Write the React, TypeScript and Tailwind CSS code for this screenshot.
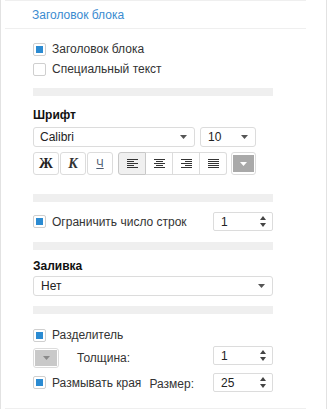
import React from "react";

const Check = ({ checked }: { checked?: boolean }) => (
  <span className="w-[13px] h-[13px] border border-[#cfcfcf] rounded-[2px] bg-white flex items-center justify-center shrink-0">
    {checked && <span className="w-[7px] h-[7px] bg-[#2b8bd2]" />}
  </span>
);

const Caret = ({ color = "#555" }: { color?: string }) => (
  <svg width="7" height="4" viewBox="0 0 7 4">
    <path d="M0 0 L7 0 L3.5 4 Z" fill={color} />
  </svg>
);

const Spin = ({ value }: { value: string }) => (
  <div className="w-[60px] h-[19px] border border-[#dcdcdc] rounded-[2px] bg-white flex items-center justify-between pl-[7px] pr-[6px] text-[12px] text-[#222]">
    <span>{value}</span>
    <svg width="6" height="11" viewBox="0 0 6 11">
      <path d="M0 4 L6 4 L3 0 Z" fill="#444" />
      <path d="M0 7 L6 7 L3 11 Z" fill="#444" />
    </svg>
  </div>
);

const Bar = () => <div className="w-[240px] h-[8px] bg-[#efefef]" />;

const AlignIcon = ({ kind }: { kind: "left" | "center" | "right" | "justify" }) => {
  const rows = [11, 7, 11, 7, 11];
  return (
    <svg width="11" height="11" viewBox="0 0 11 11">
      {rows.map((w, i) => {
        const ww = kind === "justify" ? 11 : w;
        const x = kind === "left" || kind === "justify" ? 0 : kind === "center" ? (11 - ww) / 2 : 11 - ww;
        return <rect key={i} x={x} y={i * 2 + 1} width={ww} height="1" fill="#333" />;
      })}
    </svg>
  );
};

export default function App() {
  return (
    <div className="w-[327px] h-[409px] bg-white border-l border-r border-[#e2e2e2] font-['Liberation_Sans',Arial,sans-serif] text-[12px] text-[#333] overflow-hidden">
      <div className="ml-[4px] w-[301px] h-[409px] border-t border-b border-[#efefef] flex flex-col">
        <div className="h-[28px] border-b border-[#efefef] flex items-center pl-[27px] text-[12px] text-[#3a8bd0] shrink-0">
          Заголовок блока
        </div>
        <div className="pl-[28px] flex flex-col">
          <div className="mt-[10px] h-[20px] flex items-center gap-[6px]">
            <Check checked />
            <span>Заголовок блока</span>
          </div>
          <div className="h-[20px] flex items-center gap-[6px]">
            <Check />
            <span>Специальный текст</span>
          </div>
          <div className="mt-[9px]">
            <Bar />
          </div>
          <div className="mt-[11px] h-[16px] leading-[16px] font-bold text-[#111]">Шрифт</div>
          <div className="mt-[4px] flex gap-[5px]">
            <div className="w-[162px] h-[20px] border border-[#dcdcdc] rounded-[3px] flex items-center justify-between pl-[6px] pr-[7px] text-[#222]">
              <span>Calibri</span>
              <Caret />
            </div>
            <div className="w-[56px] h-[20px] border border-[#dcdcdc] rounded-[3px] flex items-center justify-between pl-[7px] pr-[7px] text-[#222]">
              <span>10</span>
              <Caret />
            </div>
          </div>
          <div className="mt-[5px] flex items-center h-[23px]">
            <div className="w-[26px] h-[23px] border border-[#dcdcdc] rounded-[3px] flex items-center justify-center font-['Liberation_Serif',serif] font-bold text-[14px] text-[#222]">
              Ж
            </div>
            <div className="ml-[1px] w-[26px] h-[23px] border border-[#dcdcdc] rounded-[3px] flex items-center justify-center font-['Liberation_Serif',serif] font-bold italic text-[14px] text-[#333]">
              К
            </div>
            <div className="ml-[1px] w-[26px] h-[23px] border border-[#dcdcdc] rounded-[3px] flex items-center justify-center text-[11px] text-[#4a5a70] underline">
              Ч
            </div>
            <div className="ml-[5px] flex h-[23px]">
              <div className="w-[28px] h-[23px] border border-[#c8c8c8] bg-[#f0f0f0] rounded-l-[3px] flex items-center justify-center">
                <AlignIcon kind="left" />
              </div>
              <div className="w-[27px] h-[23px] border-y border-r border-[#dcdcdc] flex items-center justify-center">
                <AlignIcon kind="center" />
              </div>
              <div className="w-[27px] h-[23px] border-y border-r border-[#dcdcdc] flex items-center justify-center">
                <AlignIcon kind="right" />
              </div>
              <div className="w-[27px] h-[23px] border-y border-r border-[#dcdcdc] rounded-r-[3px] flex items-center justify-center">
                <AlignIcon kind="justify" />
              </div>
            </div>
            <div className="ml-[4px] w-[25px] h-[23px] border border-[#dcdcdc] rounded-[3px] flex items-center justify-center">
              <div className="w-[21px] h-[17px] bg-[#a9a9a9] flex items-center justify-center">
                <Caret color="#fff" />
              </div>
            </div>
          </div>
          <div className="mt-[19px]">
            <Bar />
          </div>
          <div className="mt-[10px] w-[240px] flex items-center justify-between h-[19px]">
            <div className="flex items-center gap-[6px]">
              <Check checked />
              <span>Ограничить число строк</span>
            </div>
            <Spin value="1" />
          </div>
          <div className="mt-[11px]">
            <Bar />
          </div>
          <div className="mt-[8px] h-[16px] leading-[16px] font-bold text-[#111]">Заливка</div>
          <div className="mt-[2px] w-[240px] h-[20px] border border-[#dcdcdc] rounded-[3px] flex items-center justify-between pl-[7px] pr-[7px] text-[#222]">
            <span>Нет</span>
            <Caret />
          </div>
          <div className="mt-[10px]">
            <Bar />
          </div>
          <div className="mt-[11px] h-[20px] flex items-center gap-[6px]">
            <Check checked />
            <span>Разделитель</span>
          </div>
          <div className="mt-[1px] w-[240px] flex items-start justify-between h-[22px]">
            <div className="flex items-center">
              <div className="mt-[2px] w-[26px] h-[20px] border border-[#dcdcdc] rounded-[3px] flex items-center justify-center">
                <div className="w-[22px] h-[16px] bg-[#c9c9c9] flex items-center justify-center">
                  <Caret color="#8a8a8a" />
                </div>
              </div>
              <span className="ml-[18px] mt-[2px]">Толщина:</span>
            </div>
            <Spin value="1" />
          </div>
          <div className="mt-[5px] w-[240px] flex items-center justify-between h-[19px]">
            <div className="flex items-center gap-[6px]">
              <Check checked />
              <span>Размывать края</span>
            </div>
            <div className="flex items-center">
              <span className="mr-[19px] mt-[2px]">Размер:</span>
              <Spin value="25" />
            </div>
          </div>
        </div>
      </div>
    </div>
  );
}
